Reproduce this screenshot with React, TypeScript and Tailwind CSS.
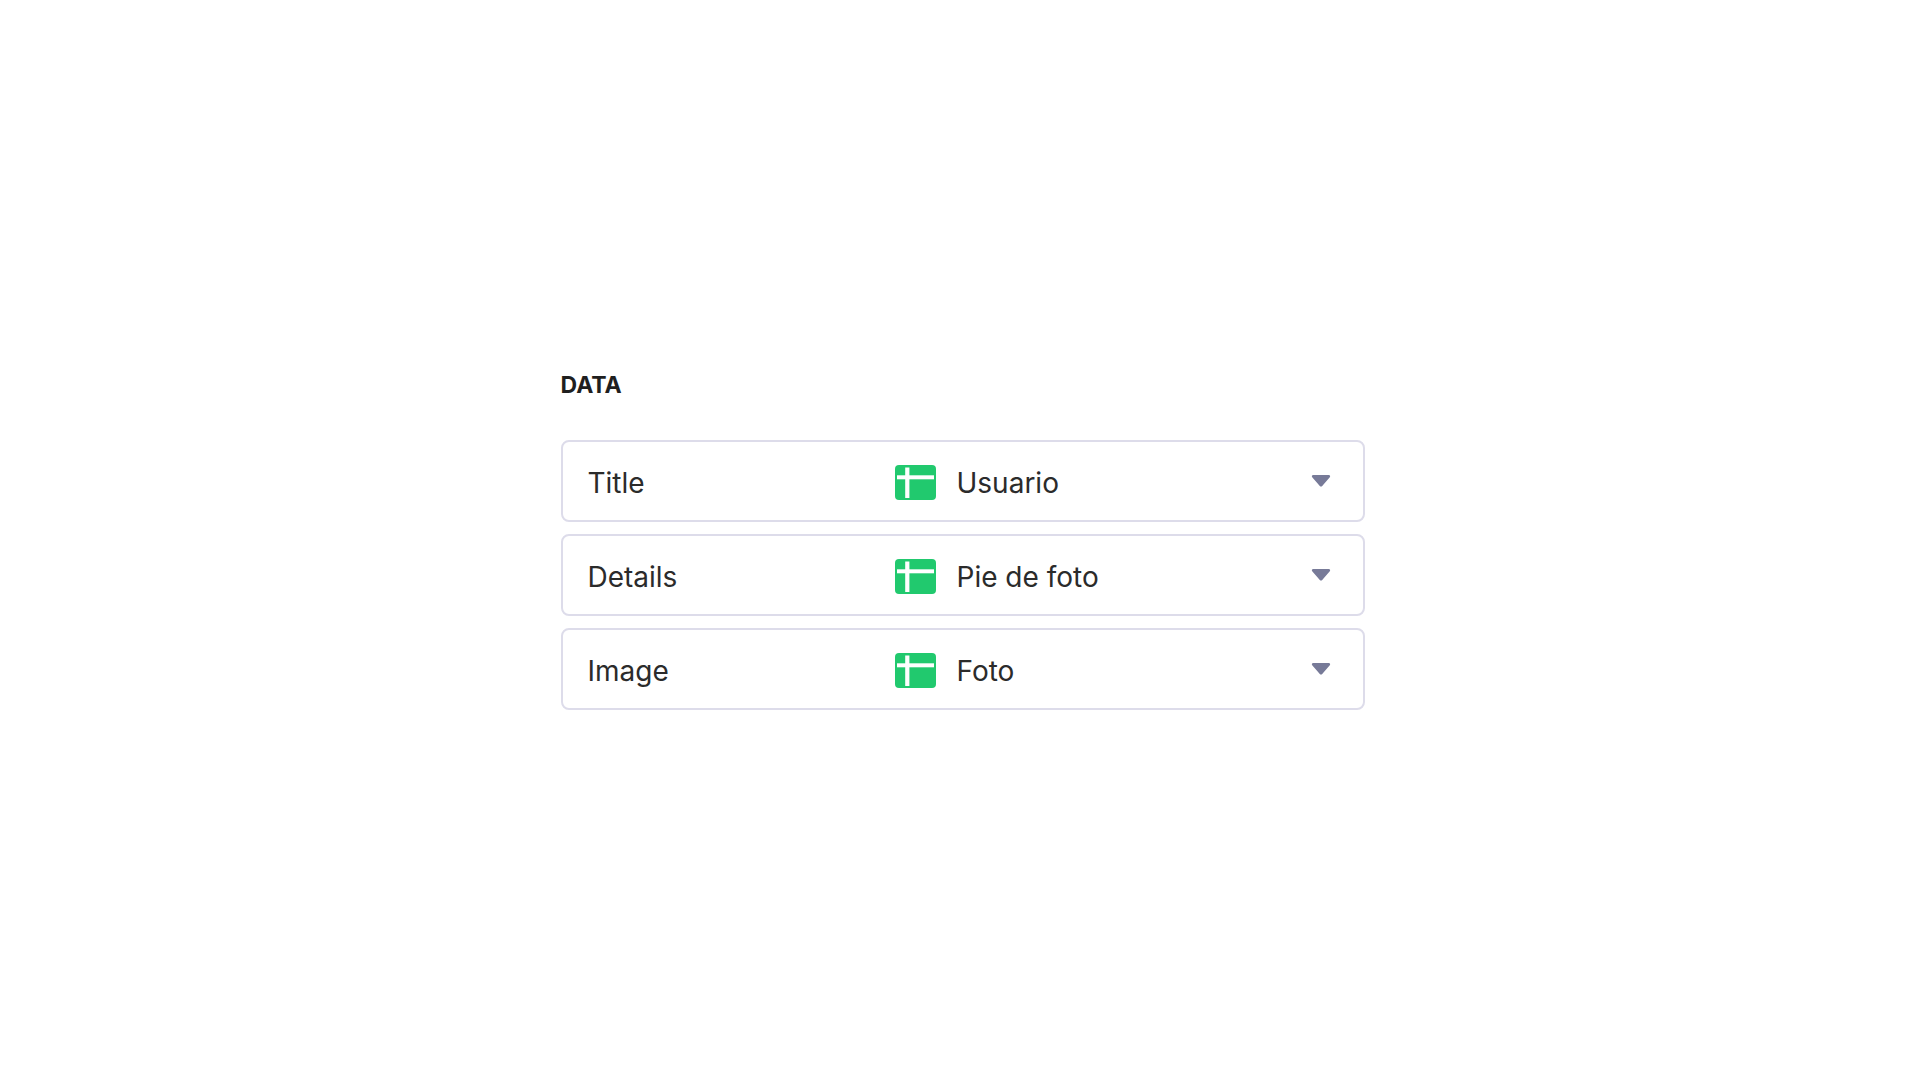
import { useState } from "react";

const columns = ["Usuario", "Pie de foto", "Foto"];

const SheetIcon = () => (
  <svg className="w-[41px] h-[35px] mt-0.5 shrink-0" viewBox="0 0 41 35" aria-hidden="true">
    <rect width="41" height="35" rx="4" fill="#21c96e" />
    <rect x="2" y="10.3" width="37" height="4" fill="white" />
    <rect x="10.2" y="2.5" width="4.2" height="30.5" fill="white" />
  </svg>
);

const ArrowIcon = () => (
  <svg
    className="w-5 h-3 absolute right-0 top-1/2 -translate-y-1/2 pointer-events-none"
    viewBox="0 0 20 12"
    aria-hidden="true"
  >
    <path
      d="M2.2 0h15.6c1.2 0 1.8 1.4 1 2.3l-7.6 8.6c-.7.8-1.7.8-2.4 0L1.2 2.3C.4 1.4 1 0 2.2 0z"
      fill="#777a98"
    />
  </svg>
);

const DataRow = ({ label, initial }: { label: string; initial: string }) => {
  const [value, setValue] = useState(initial);
  const id = `data-${label.toLowerCase()}`;

  return (
    <div className="flex items-center h-[82px] pl-[25px] pr-8 bg-white border-2 border-[#dddcea] rounded-lg">
      <label htmlFor={id} className="w-[307px] shrink-0 pt-1">
        {label}
      </label>
      <div className="flex items-center gap-[21px] flex-1">
        <SheetIcon />
        <div className="relative flex-1">
          <select
            id={id}
            className="block w-full pt-1 appearance-none bg-transparent outline-none cursor-pointer"
            value={value}
            onChange={(e) => setValue(e.target.value)}
          >
            {columns.map((column) => (
              <option key={column}>{column}</option>
            ))}
          </select>
          <ArrowIcon />
        </div>
      </div>
    </div>
  );
};

const App = () => {
  return (
    <main className="min-h-screen flex justify-center items-center pl-[5px] bg-white font-['Inter',sans-serif] text-[28px] leading-9 text-[#2b2b2b]">
      <section className="w-full max-w-[804px]">
        <h2 className="mb-10 text-[23px] leading-[30px] font-bold text-[#1f1f1f]">DATA</h2>
        <div className="flex flex-col gap-3">
          <DataRow label="Title" initial="Usuario" />
          <DataRow label="Details" initial="Pie de foto" />
          <DataRow label="Image" initial="Foto" />
        </div>
      </section>
    </main>
  );
};

export default App;
